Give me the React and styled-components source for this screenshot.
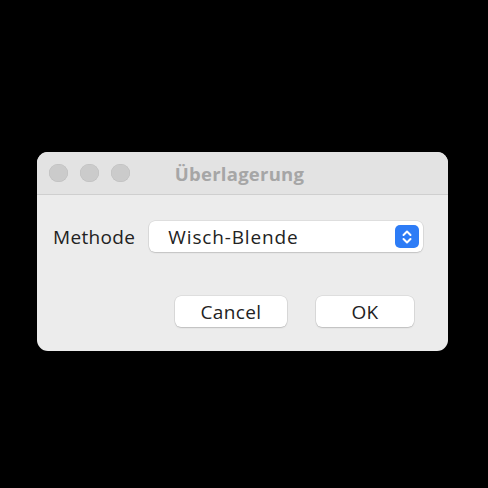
import React from "react";
import styled, { createGlobalStyle } from "styled-components";

const Global = createGlobalStyle`
  html, body { margin: 0; padding: 0; background: #000; }
  body { width: 488px; height: 488px; overflow: hidden; font-family: "Open Sans", "Noto Sans", sans-serif; }
`;

const Stage = styled.div`
  width: 488px;
  height: 488px;
  display: flex;
  align-items: flex-start;
  padding: 152px 0 0 37px;
  box-sizing: border-box;
`;

const Window = styled.div`
  width: 411px;
  height: 199px;
  border-radius: 11px;
  background: #ececec;
  overflow: hidden;
  display: flex;
  flex-direction: column;
`;

const TitleBar = styled.div`
  height: 43px;
  flex: none;
  box-sizing: border-box;
  background: #e3e3e3;
  border-bottom: 1px solid #cfcfcf;
  display: grid;
  grid-template-columns: 1fr auto 1fr;
  align-items: center;
  padding: 0 12px;
`;

const Lights = styled.div`
  display: flex;
  gap: 12.5px;
  align-items: center;
`;

const Light = styled.span`
  width: 18.5px;
  height: 18.5px;
  border-radius: 50%;
  background: #cbcbcb;
  box-shadow: inset 0 0 0 0.5px #bdbdbd;
`;

const Title = styled.div`
  font-weight: 700;
  font-size: 18.5px;
  color: #a6a6a6;
  letter-spacing: 0.25px;
  margin-left: -6px;
`;

const Body = styled.div`
  flex: 1;
  display: flex;
  flex-direction: column;
  padding: 26px 25px 0 16px;
`;

const Row = styled.div`
  display: flex;
  align-items: center;
  gap: 14px;
`;

const Label = styled.span`
  font-size: 19px;
  color: #222;
  letter-spacing: 0.35px;
`;

const Select = styled.div`
  flex: 1;
  height: 31px;
  background: #fff;
  border-radius: 6px;
  box-shadow: 0 0 0 0.5px rgba(0, 0, 0, 0.12), 0 1px 1.5px rgba(0, 0, 0, 0.12);
  display: flex;
  align-items: center;
  justify-content: space-between;
  padding: 0 4px 0 19px;
  box-sizing: border-box;
`;

const Value = styled.span`
  font-size: 19px;
  color: #222;
  letter-spacing: 0.85px;
`;

const Stepper = styled.span`
  width: 24px;
  height: 23px;
  border-radius: 5px;
  background: #2d7cf6;
  display: flex;
  align-items: center;
  justify-content: center;
`;

const Buttons = styled.div`
  display: flex;
  justify-content: flex-end;
  gap: 29px;
  margin-top: 44px;
  padding-right: 9px;
`;

const Button = styled.button`
  width: ${(p) => p.$w}px;
  height: 31px;
  border: none;
  border-radius: 6px;
  background: #fff;
  box-shadow: 0 0 0 0.5px rgba(0, 0, 0, 0.12), 0 1px 1.5px rgba(0, 0, 0, 0.14);
  font-family: "Open Sans", "Noto Sans", sans-serif;
  font-size: 19px;
  color: #222;
  letter-spacing: 0.4px;
  padding: 0;
  display: flex;
  align-items: center;
  justify-content: center;
`;

export default function App() {
  return (
    <>
      <Global />
      <Stage>
        <Window>
          <TitleBar>
            <Lights>
              <Light />
              <Light />
              <Light />
            </Lights>
            <Title>Überlagerung</Title>
            <span />
          </TitleBar>
          <Body>
            <Row>
              <Label>Methode</Label>
              <Select>
                <Value>Wisch-Blende</Value>
                <Stepper>
                  <svg width="14" height="18" viewBox="0 0 14 18" fill="none" stroke="#fff" strokeWidth="2" strokeLinecap="round" strokeLinejoin="round">
                    <path d="M3.5 7 L7 3.5 L10.5 7" />
                    <path d="M3.5 11 L7 14.5 L10.5 11" />
                  </svg>
                </Stepper>
              </Select>
            </Row>
            <Buttons>
              <Button $w={112}>Cancel</Button>
              <Button $w={98}>OK</Button>
            </Buttons>
          </Body>
        </Window>
      </Stage>
    </>
  );
}
